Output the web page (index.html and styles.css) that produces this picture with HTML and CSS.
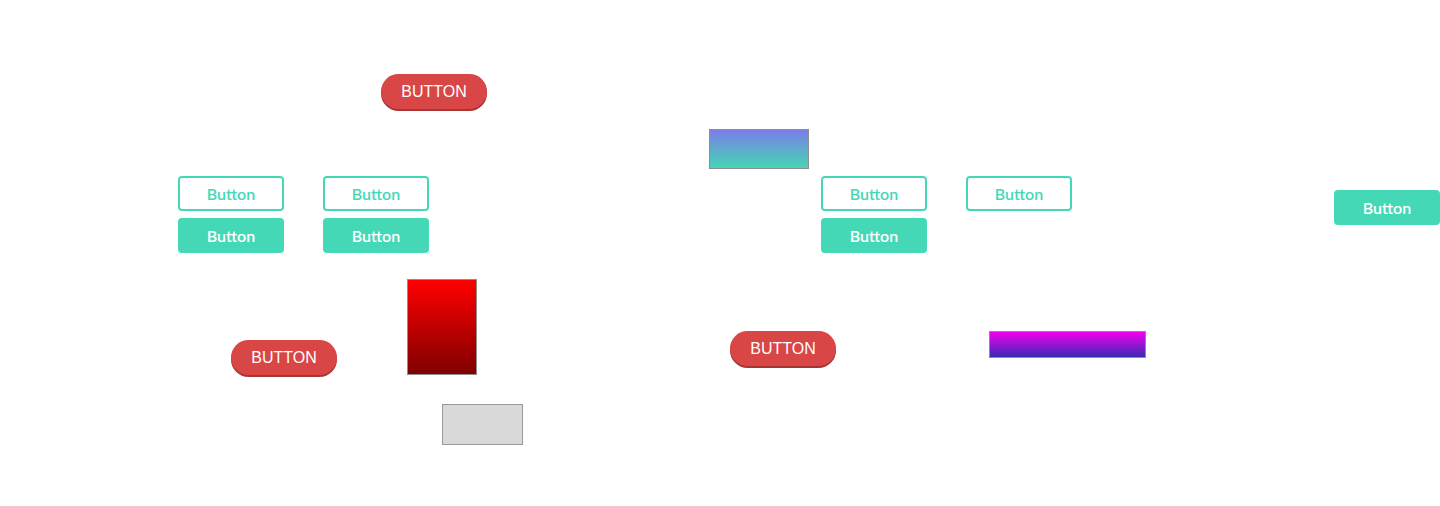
FILE: index.html
```html
<!DOCTYPE html>
<html lang="en">
<head>
<meta charset="utf-8">
<title>Buttons</title>
<link rel="stylesheet" href="styles.css">
</head>
<body>
<main class="canvas">
  <button class="pill pill-a">BUTTON</button>
  <button class="pill pill-b">BUTTON</button>
  <button class="pill pill-c">BUTTON</button>

  <div class="swatch swatch-teal"></div>
  <div class="swatch swatch-red"></div>
  <div class="swatch swatch-gray"></div>
  <div class="swatch swatch-purple"></div>

  <div class="group group-a">
    <button class="mint outline">Button</button>
    <button class="mint outline">Button</button>
    <button class="mint solid">Button</button>
    <button class="mint solid">Button</button>
  </div>

  <div class="group group-b">
    <button class="mint outline">Button</button>
    <button class="mint outline">Button</button>
    <button class="mint solid">Button</button>
  </div>

  <button class="mint solid single">Button</button>
</main>
</body>
</html>
```

FILE: styles.css
```css
* { box-sizing: border-box; }
html, body { margin: 0; padding: 0; background: #fff; }
.canvas {
  position: relative;
  width: 1440px;
  height: 506px;
  overflow: hidden;
  font-family: "Liberation Sans", Arial, sans-serif;
}

.pill {
  position: absolute;
  width: 106px;
  height: 35px;
  border: none;
  border-radius: 18px;
  background: #d84646;
  box-shadow: 0 2px 0 #a83434;
  color: #fff;
  font-family: "Liberation Sans", Arial, sans-serif;
  font-size: 16px;
  padding: 1px 0 0;
  line-height: 34px;
}
.pill-a { left: 381px; top: 74px; }
.pill-b { left: 231px; top: 340px; }
.pill-c { left: 730px; top: 331px; }

.swatch { position: absolute; border: 1px solid #8e8e8e; }
.swatch-teal {
  left: 709px; top: 129px; width: 100px; height: 40px;
  background: linear-gradient(#7a7ee8, #45d6b4);
}
.swatch-red {
  left: 407px; top: 279px; width: 70px; height: 96px;
  background: linear-gradient(#ff0000, #800000);
}
.swatch-gray {
  left: 442px; top: 404px; width: 81px; height: 41px;
  background: #d9d9d9;
  border-color: #9a9a9a;
}
.swatch-purple {
  left: 989px; top: 331px; width: 157px; height: 27px;
  background: linear-gradient(#f200ee, #3a2ab4);
}

.group {
  position: absolute;
  display: grid;
  grid-template-columns: 106px 106px;
  column-gap: 39px;
  row-gap: 7px;
}
.group-a { left: 178px; top: 176px; }
.group-b { left: 821px; top: 176px; }

.mint {
  width: 106px;
  height: 35px;
  border-radius: 4px;
  font-family: Lato, "Noto Sans", sans-serif;
  font-size: 16px;
  padding: 0;
  line-height: 31px;
}
.mint.outline {
  background: #fff;
  border: 2px solid #45d8b6;
  color: #45d8b6;
  font-weight: 600;
}
.mint.solid {
  background: #45d8b6;
  border: 2px solid #45d8b6;
  color: #fff;
  font-weight: 600;
}
.single { position: absolute; left: 1334px; top: 190px; }
```
